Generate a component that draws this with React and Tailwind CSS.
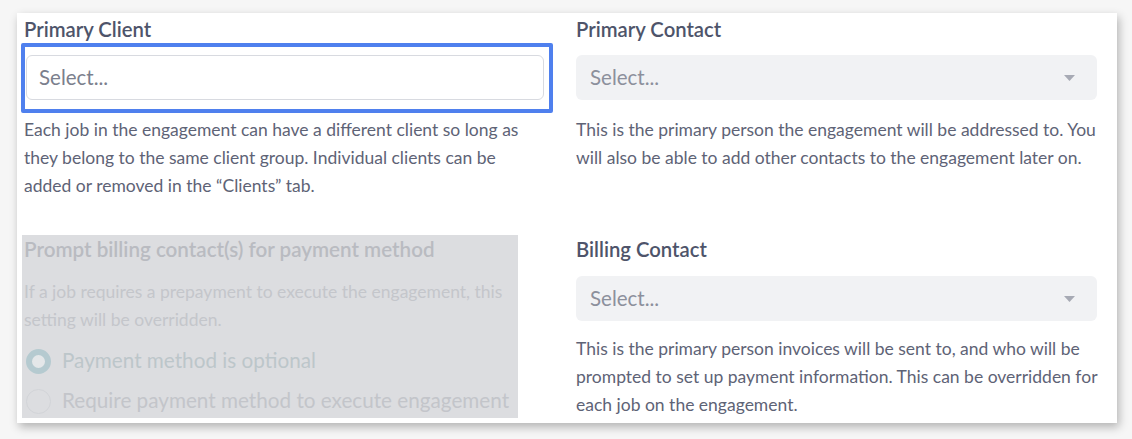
import React from "react";

const Caret = () => (
    <svg width="11" height="6" viewBox="0 0 11 6" className="shrink-0">
        <path d="M0 0 L11 0 L5.5 6 Z" fill="#a7aab4" />
    </svg>
);

const GraySelect = () => (
    <div className="flex h-[45px] items-center justify-between rounded-[6px] bg-[#f1f2f4] pl-[14px] pr-[22px]">
        <span className="text-[20.5px] text-[#8c909c]">Select...</span>
        <Caret />
    </div>
);

const Radio = ({ checked, label }) => (
    <div className="flex h-[40px] items-center gap-[11px] pl-[2px]">
        {checked ? (
            <span className="h-[25px] w-[25px] rounded-full border-[6px] border-[#b5cad0] bg-[#e4e7e9]" />
        ) : (
            <span className="h-[25px] w-[25px] rounded-full border border-[#d2d4d8] bg-[#dcdde0]" />
        )}
        <span className={"text-[20.7px] whitespace-nowrap " + (checked ? "text-[#bcc6ca]" : "text-[#c3c5ca]")}>
            {label}
        </span>
    </div>
);

export default function App() {
    return (
        <div className="min-h-screen bg-[#f6f6f6] pt-[13px] pl-[17px] font-['Lato',sans-serif]">
            <div className="w-[1100px] h-[410px] bg-white pl-[7px] pr-[20px] pt-[2px] shadow-[2px_4px_9px_rgba(0,0,0,0.28)]">
                <div className="grid grid-cols-[522px_521px] gap-x-[30px] gap-y-[35px]">
                    {/* Primary client */}
                    <div>
                        <h3 className="text-[20.3px] leading-[28px] font-semibold text-[#4e546a]">Primary Client</h3>
                        <div className="relative mx-[2px] mt-[12px]">
                            <div className="flex h-[45px] items-center rounded-[6px] border border-[#d8dae0] bg-white px-[12px]">
                                <span className="text-[20.5px] text-[#7b7f8d]">Select...</span>
                            </div>
                            <div className="pointer-events-none absolute -left-[5px] -top-[12px] -right-[9px] -bottom-[13px] border-[4px] border-[#4f80ee] rounded-[2px]" />
                        </div>
                        <p className="mt-[16px] text-[17.5px] leading-[28px] text-[#5e6376] whitespace-nowrap">
                            Each job in the engagement can have a different client so long as
                            <br />
                            they belong to the same client group. Individual clients can be
                            <br />
                            added or removed in the “Clients” tab.
                        </p>
                    </div>

                    {/* Primary contact */}
                    <div>
                        <h3 className="text-[20.3px] leading-[28px] font-semibold text-[#4e546a]">Primary Contact</h3>
                        <div className="mt-[12px]">
                            <GraySelect />
                        </div>
                        <p className="mt-[16px] text-[17.5px] leading-[28px] text-[#5e6376] whitespace-nowrap">
                            This is the primary person the engagement will be addressed to. You
                            <br />
                            will also be able to add other contacts to the engagement later on.
                        </p>
                    </div>

                    {/* Payment method (disabled) */}
                    <div className="-ml-[2px] w-[496px] h-[183px] bg-[#dcdde0] pl-[2px]">
                        <h3 className="text-[20.6px] leading-[28px] font-semibold text-[#b9bbc1] whitespace-nowrap">
                            Prompt billing contact(s) for payment method
                        </h3>
                        <p className="mt-[15px] text-[17.5px] leading-[28px] text-[#c4c6cb] whitespace-nowrap">
                            If a job requires a prepayment to execute the engagement, this
                            <br />
                            setting will be overridden.
                        </p>
                        <div className="mt-[7px]">
                            <Radio checked label="Payment method is optional" />
                            <Radio label="Require payment method to execute engagement" />
                        </div>
                    </div>

                    {/* Billing contact */}
                    <div>
                        <h3 className="text-[20.3px] leading-[28px] font-semibold text-[#4e546a]">Billing Contact</h3>
                        <div className="mt-[13px]">
                            <GraySelect />
                        </div>
                        <p className="mt-[14px] text-[17.5px] leading-[28px] text-[#5e6376] whitespace-nowrap">
                            This is the primary person invoices will be sent to, and who will be
                            <br />
                            prompted to set up payment information. This can be overridden for
                            <br />
                            each job on the engagement.
                        </p>
                    </div>
                </div>
            </div>
        </div>
    );
}
